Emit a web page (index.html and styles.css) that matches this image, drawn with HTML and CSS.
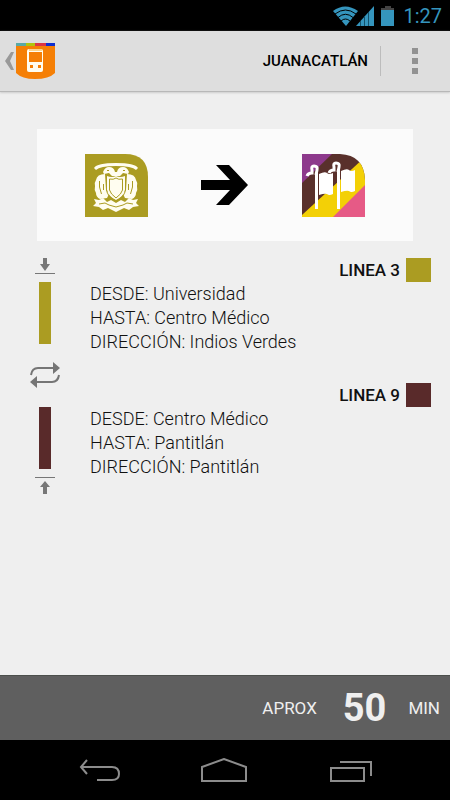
FILE: index.html
```html
<!DOCTYPE html>
<html lang="es">
<head>
  <meta charset="UTF-8">
  <meta name="viewport" content="width=device-width, initial-scale=1">
  <title>Juanacatlán</title>
  <link rel="stylesheet" href="styles.css">
</head>
<body>
  <div class="status">
    <svg width="62" height="20" viewBox="0 0 62 20">
      <path fill="#3595bd" d="M0 5Q12-4 25 5L13 20z"/>
      <path fill="none" stroke="#000" d="M2 8Q12.500 0 23 8M5 11.500Q12.500 5 20 11.500M8 15Q12.500 11 17 15"/>
      <path fill="#3595bd" d="M23 20L41 0v20z"/>
      <path stroke="#12516b" d="M27.500 15v5M31.500 10v10M35.500 6v14"/>
      <path fill="#444" d="M52 0h6v2h3v3H48V2h4z"/>
      <path fill="#3595bd" d="M48 4h13v16H48z"/>
    </svg>
    <span class="clock">1:27</span>
  </div>

  <header class="topbar">
    <button class="back" aria-label="Regresar">
      <svg width="56" height="40" viewBox="0 0 56 40">
        <path fill="#999" d="M11 11h3l-4 9 4 9h-3L5 20z"/>
        <path fill="#f57f05" d="M16 3h39v29Q49 38 35 38Q22 38 16 32z"/>
        <path fill="#5aa9a6" d="M16 2h10v3H16z"/>
        <path fill="#b1c40e" d="M26 2h9v3h-9z"/>
        <path fill="#dc3544" d="M35 2h11v3H35z"/>
        <path fill="#0e2fd0" d="M46 2h9v3h-9z"/>
        <rect x="27" y="8" width="16" height="23" rx="2" fill="#fffdf0"/>
        <path fill="#fbd48d" d="M29 8h13v2H29z"/>
        <path fill="#f57f05" d="M29 11h13v10H29zM30 24h3v3h-3zM38 24h3v3h-3z"/>
      </svg>
    </button>
    <h1 class="title">JUANACATLÁN</h1>
    <button class="more" aria-label="Más opciones">
      <svg width="6" height="26" viewBox="0 0 6 26">
        <path fill="#929292" d="M0 0h6v6H0zM0 10h6v6H0zM0 20h6v6H0z"/>
      </svg>
    </button>
  </header>

  <main class="content">
    <section class="trip">
      <svg width="63" height="63" viewBox="0 0 63 63" role="img" aria-label="Universidad">
        <path fill="#ab9c22" d="M0 0H40Q63 0 63 23V63H0z"/>
        <g fill="#fffdf0">
          <path d="M9 14Q12 9 31 9Q50 9 53 14L51 16Q47 12 31 12Q15 12 11 16z"/>
          <path d="M19 20l-1-2q2-5 6-5q5 0 6 5h2q1-5 6-5q4 0 6 5l-1 2-5-1-3 3h-8l-3-3z"/>
          <path d="M20 20q-8 0-9 6q-2 3-1 6q-1 4 1 7q0 4 4 6l7-1 2-4-3-4zM42 20q8 0 9 6q2 3 1 6q1 4-1 7q0 4-4 6l-7-1-2-4 3-4z"/>
          <path d="M22 22q5 2 9 0q4 2 9 0v14q-1 6-9 10q-8-4-9-10z"/>
          <path d="M9 45l5 1 4-2 4 4 4-2 5 3 5-3 4 2 4-4 4 2 5-1-2 4 3 3-6 1-4 3-5-2-8 4-8-4-5 2-4-3-6-1 3-3z"/>
        </g>
        <path fill="none" stroke="#ab9c22" d="M21.500 22v14q1 7 9.500 11q8.500-4 9.500-11V22M24.500 25q4 1 6.500-1q2.500 2 6.500 1v11q-1 4-6.500 8q-5.500-4-6.500-8zM14.500 27v6l2 7M18.500 30v6M47.500 27v6l-2 7M43.500 30v6M14 50l6-1 4 2 7 2 7-2 4-2 6 1"/>
        <path fill="#ab9c22" d="M22 16h2v1h-2zM38 16h2v1h-2z"/>
      </svg>
      <svg width="48" height="40" viewBox="0 0 48 40" role="img" aria-label="hacia">
        <path d="M15 0h13l19 20-19 20H15l14-15H0V15h29z"/>
      </svg>
      <svg width="63" height="63" viewBox="0 0 63 63" role="img" aria-label="Pantitlán">
        <defs>
          <clipPath id="station"><path d="M0 0H38Q62 1 63 26V63H0z"/></clipPath>
        </defs>
        <g clip-path="url(#station)">
          <path fill="#59302b" d="M0 0h63v63H0z"/>
          <path fill="#8d398c" d="M0 0h30L0 29z"/>
          <path fill="#f3d006" d="M63 3v60H0V61z"/>
          <path fill="#e65a86" d="M63 31v32H31z"/>
        </g>
        <g fill="#fff">
          <path d="M17 20q6-3 8-1q2 2 6 0v21q-4 2-6 0q-2-1-8 1zM39 17q6-3 8-1q2 2 6 0v21q-4 2-6 0q-2-1-8 1z"/>
          <path d="M13 19h3v36h-3zM35 16h3v39h-3z"/>
        </g>
        <path fill="none" stroke="#fff" stroke-width="3" d="M5 22q1-3 5-3v-3q-1-4 2-4q4 0 3 4l-1 5M27 19q1-3 5-3v-3q-1-4 2-4q4 0 3 4l-1 5"/>
      </svg>
    </section>

    <section class="route">
      <div class="rail">
        <svg width="20" height="24" viewBox="0 0 20 24">
          <path fill="#777" d="M8 0h4v6h3l-5 7-5-7h3zM0 15h20v1H0z"/>
        </svg>
        <div class="bar linea3"></div>
        <svg class="transfer" width="30" height="26" viewBox="0 0 30 26">
          <path fill="none" stroke="#757575" stroke-width="2" d="M1 13Q2 6 8 6H24M29 13Q28 20 22 20H6"/>
          <path fill="#757575" d="M23 0l7 6-7 6zM7 14l-7 6 7 6z"/>
        </svg>
        <div class="bar linea9"></div>
        <svg width="20" height="26" viewBox="0 0 20 26">
          <path fill="#777" d="M0 8h20v1H0zM10 12l5 6h-3v7H8v-7H5z"/>
        </svg>
      </div>
      <div class="legs">
        <article class="leg">
          <h2 class="line">LINEA 3 <span class="color linea3"></span></h2>
          <p>DESDE: Universidad</p>
          <p>HASTA: Centro Médico</p>
          <p>DIRECCIÓN: Indios Verdes</p>
        </article>
        <article class="leg">
          <h2 class="line">LINEA 9 <span class="color linea9"></span></h2>
          <p>DESDE: Centro Médico</p>
          <p>HASTA: Pantitlán</p>
          <p>DIRECCIÓN: Pantitlán</p>
        </article>
      </div>
    </section>
  </main>

  <footer class="time">
    <span>APROX</span>
    <strong>50</strong>
    <span>MIN</span>
  </footer>

  <nav class="nav">
    <button aria-label="Atrás">
      <svg width="42" height="24" viewBox="0 0 42 24">
        <path fill="none" stroke="#8c8c8c" stroke-width="2" d="M9 2L3 9l6 7M3 9H34q7 0 7 7q0 6-7 6H19"/>
      </svg>
    </button>
    <button aria-label="Inicio">
      <svg width="46" height="24" viewBox="0 0 46 24">
        <path fill="none" stroke="#8c8c8c" stroke-width="2" d="M1 23V9L23 1l22 8v14z"/>
      </svg>
    </button>
    <button aria-label="Recientes">
      <svg width="44" height="24" viewBox="0 0 44 24">
        <path fill="none" stroke="#8c8c8c" stroke-width="2" d="M3 10h33v13H3zM12 4h31v14"/>
      </svg>
    </button>
  </nav>
</body>
</html>
```
FILE: styles.css
```css
* {
  box-sizing: border-box;
}
body {
  margin: 0;
  min-height: 100vh;
  display: flex;
  flex-direction: column;
  background-color: #efefef;
  color: #111;
  font-family: Roboto, sans-serif;
}
button {
  padding: 0;
  background: none;
  border: none;
  cursor: pointer;
}
svg {
  display: block;
}
h1, h2, p {
  margin: 0;
}
.status {
  height: 31px;
  padding-right: 8px;
  display: flex;
  align-items: center;
  justify-content: flex-end;
  gap: 8px;
  background-color: #000;
}
.clock {
  color: #3595bd;
  font-size: 20px;
}
.topbar {
  height: 61px;
  display: flex;
  align-items: center;
  background-color: #dedede;
  border-bottom: 1px solid #b8b8b8;
  box-shadow: 0 1px 2px #ccc;
}
.title {
  margin-left: auto;
  padding-right: 12px;
  border-right: 1px solid #bcbcbc;
  color: #000;
  font-size: 15px;
  font-weight: 500;
  line-height: 30px;
}
.more {
  padding: 0 32px 0 31px;
}
.content {
  flex: 1;
  padding-top: 37px;
}
.trip {
  margin: 0 37px 17px;
  padding: 0 48px;
  height: 112px;
  display: flex;
  align-items: center;
  justify-content: space-between;
  background-color: #fbfbfb;
}
.route {
  display: flex;
}
.rail {
  width: 90px;
  display: flex;
  flex-direction: column;
  align-items: center;
}
.bar {
  width: 12px;
  height: 62px;
}
.transfer {
  margin: 18px 0 19px;
}
.linea3 {
  background-color: #ab9c22;
}
.linea9 {
  background-color: #592a2a;
}
.legs {
  flex: 1;
}
.leg {
  margin-bottom: 29px;
}
.leg p {
  font-size: 18px;
  font-weight: 300;
  line-height: 24px;
}
.line {
  height: 24px;
  padding-right: 19px;
  display: flex;
  align-items: center;
  justify-content: flex-end;
  gap: 6px;
  font-size: 17px;
  font-weight: 500;
}
.color {
  width: 25px;
  height: 24px;
}
.time {
  height: 65px;
  padding: 0 10px;
  display: flex;
  align-items: center;
  justify-content: flex-end;
  background-color: #5f5f5f;
  border-top: 1px solid #4c4f4c;
  color: #efefef;
  font-size: 17px;
}
.time strong {
  margin: 0 22px 0 26px;
  font-size: 38px;
}
.nav {
  height: 60px;
  padding: 0 78px;
  display: flex;
  align-items: center;
  justify-content: space-between;
  background-color: #000;
}
```
